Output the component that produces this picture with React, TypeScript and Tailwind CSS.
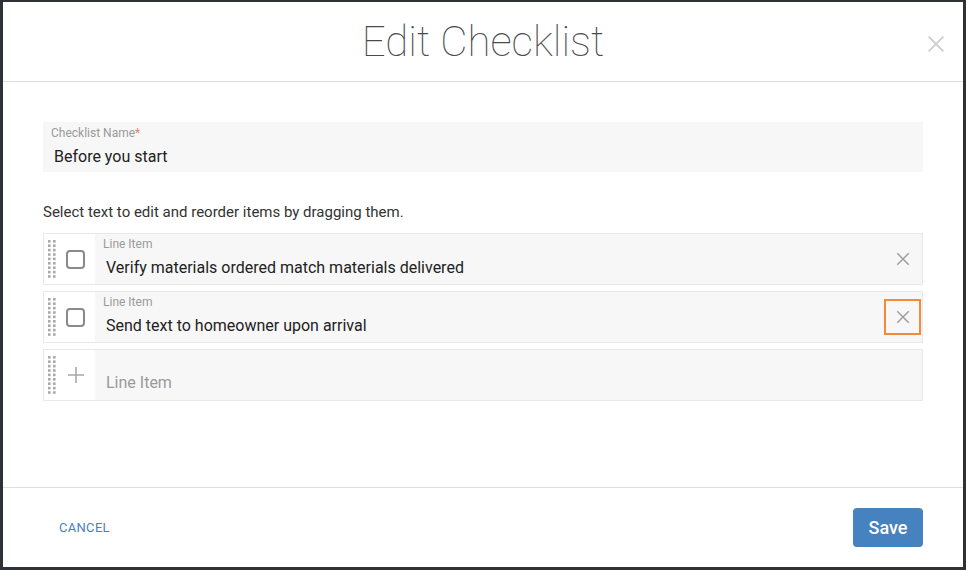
import { useState } from "react";

type Item = { id: number; text: string };

const initialItems: Item[] = [
  { id: 1, text: "Verify materials ordered match materials delivered" },
  { id: 2, text: "Send text to homeowner upon arrival" },
];

function DragHandle() {
  const rows = Array.from({ length: 9 });
  return (
    <svg width="8" height="38" viewBox="0 0 8 38" className="shrink-0 text-[#a9a9a9]" aria-hidden>
      {rows.map((_, i) => (
        <g key={i} fill="currentColor">
          <rect x="0" y={i * 4.4} width="2.6" height="2.6" />
          <rect x="5" y={i * 4.4} width="2.6" height="2.6" />
        </g>
      ))}
    </svg>
  );
}

function CloseIcon({ size = 16, className = "" }: { size?: number; className?: string }) {
  return (
    <svg width={size} height={size} viewBox="0 0 16 16" className={className} aria-hidden>
      <path d="M2 2 L14 14 M14 2 L2 14" stroke="currentColor" strokeWidth="1.6" strokeLinecap="square" />
    </svg>
  );
}

function LineItemRow({ item, focused }: { item: Item; focused?: boolean }) {
  return (
    <div className="flex h-[52px] border border-[#e8e8e8] bg-white">
      <div className="flex w-[51px] shrink-0 items-center pl-[4px]">
        <DragHandle />
        <div className="ml-[10px] h-[19px] w-[19px] rounded-[4px] border-2 border-[#8a8a8a]" />
      </div>
      <div className="flex flex-1 items-center bg-[#f7f7f7] pr-[1px]">
        <div className="flex-1 self-start pl-[8px] pt-[3px]">
          <div className="text-[12px] leading-[14px] text-[#9a9a9a]">Line Item</div>
          <div className="mt-[7px] pl-[3px] text-[16px] leading-[20px] text-[#222]">{item.text}</div>
        </div>
        <button
          className={`flex h-[36px] w-[37px] items-center justify-center text-[#9a9a9a] ${
            focused ? "border-2 border-[#f28a3c]" : "border-2 border-transparent"
          }`}
        >
          <CloseIcon size={14} />
        </button>
      </div>
    </div>
  );
}

export default function App() {
  const [items] = useState(initialItems);

  return (
    <div
      className="h-[570px] w-[966px] overflow-hidden bg-[#2e3237] pt-[2px] pl-[3px]"
      style={{ fontFamily: "Roboto, 'Liberation Sans', sans-serif" }}
    >
      <div className="flex h-[565px] w-[960px] flex-col bg-white">
        {/* Header */}
        <div className="relative flex h-[80px] shrink-0 items-center justify-center border-b border-[#dedede]">
          <h1 className="text-[42px] font-thin leading-none text-[#4a4a4a]">Edit Checklist</h1>
          <button className="absolute right-[18px] top-[33px] text-[#cfcfcf]">
            <CloseIcon size={18} />
          </button>
        </div>

        {/* Body */}
        <div className="flex-1 px-[40px] pt-[40px]">
          <div className="h-[50px] bg-[#f7f7f7] px-[8px] pt-[4px]">
            <div className="text-[12px] leading-[14px] text-[#9a9a9a]">
              Checklist Name<span className="text-[#f47c6a]">*</span>
            </div>
            <div className="mt-[7px] pl-[3px] text-[16px] leading-[20px] text-[#222]">Before you start</div>
          </div>

          <p className="mt-[31px] text-[15px] leading-[18px] text-[#333]">
            Select text to edit and reorder items by dragging them.
          </p>

          <div className="mt-[12px] flex flex-col gap-[6px]">
            {items.map((item, i) => (
              <LineItemRow key={item.id} item={item} focused={i === 1} />
            ))}
            <div className="flex h-[52px] border border-[#e8e8e8] bg-white">
              <div className="flex w-[51px] shrink-0 items-center pl-[4px]">
                <DragHandle />
                <svg width="18" height="18" viewBox="0 0 18 18" className="ml-[11px] text-[#a8a8a8]" aria-hidden>
                  <path d="M9 1 V17 M1 9 H17" stroke="currentColor" strokeWidth="1.6" />
                </svg>
              </div>
              <div className="flex flex-1 items-end bg-[#f7f7f7] pb-[7px] pl-[11px]">
                <span className="text-[16px] leading-[20px] text-[#9a9a9a]">Line Item</span>
              </div>
            </div>
          </div>
        </div>

        {/* Footer */}
        <div className="flex h-[80px] shrink-0 items-center justify-between border-t border-[#dedede] pl-[56px] pr-[40px]">
          <button className="text-[13px] tracking-[0.3px] text-[#4a7fc1]">CANCEL</button>
          <button className="h-[39px] w-[70px] rounded-[4px] bg-[#4681c0] text-[18px] font-medium text-white">
            Save
          </button>
        </div>
      </div>
    </div>
  );
}
